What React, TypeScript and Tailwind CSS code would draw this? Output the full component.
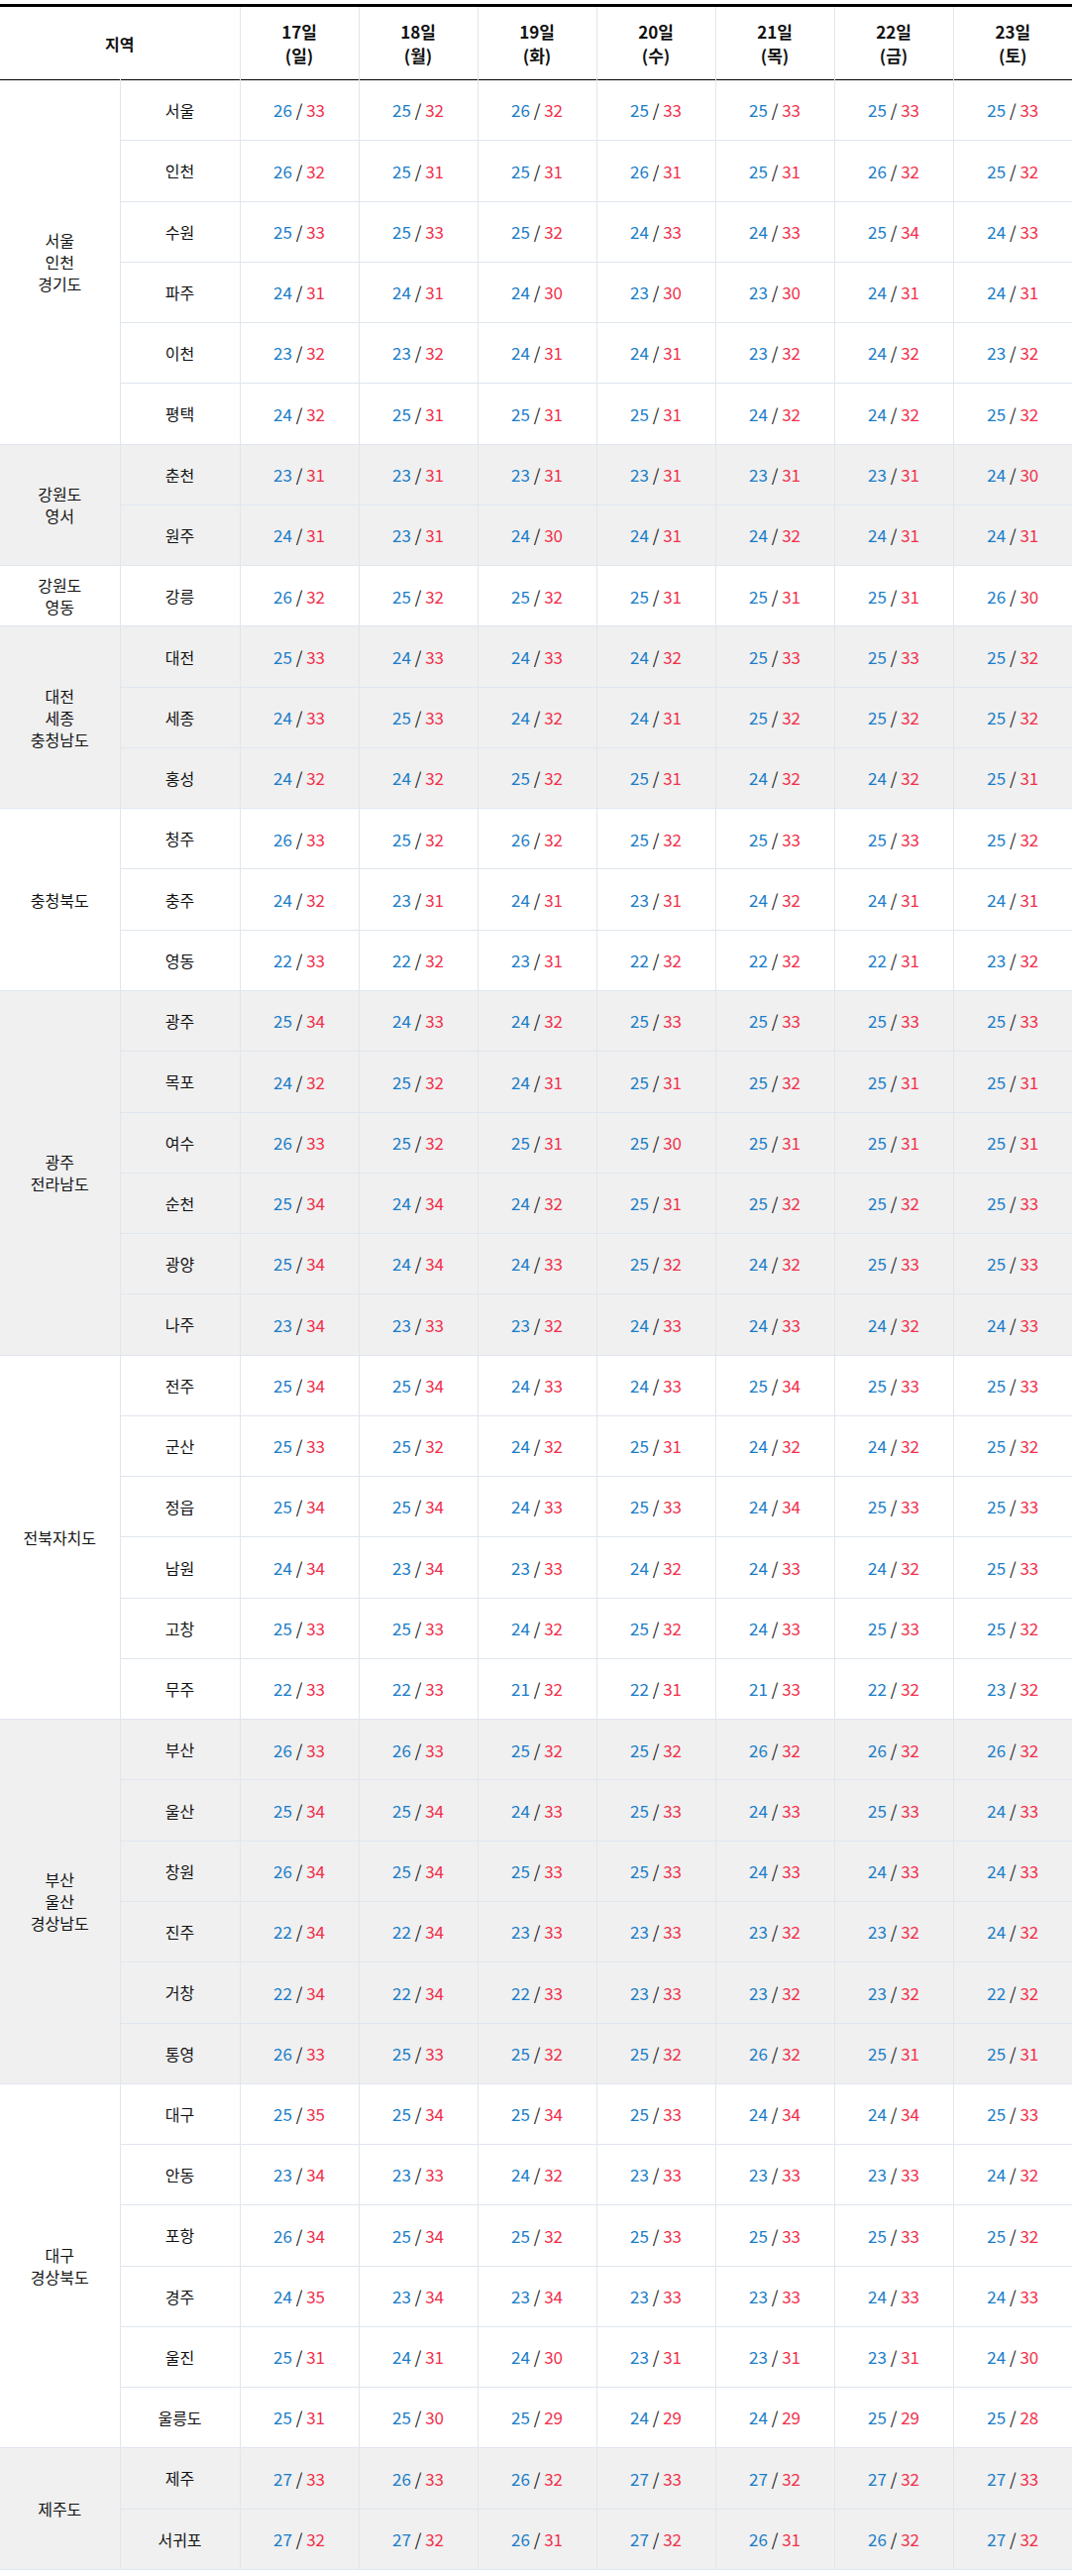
import React from 'react';

type Row = { name: string; temps: string[] };
type Group = { label: string[]; shaded: boolean; rows: Row[] };

const days = [
  ['17일', '(일)'],
  ['18일', '(월)'],
  ['19일', '(화)'],
  ['20일', '(수)'],
  ['21일', '(목)'],
  ['22일', '(금)'],
  ['23일', '(토)'],
];

// 최저/최고 기온 "최저/최고" 형식
const r = (name: string, s: string): Row => ({ name, temps: s.split(' ') });

const groups: Group[] = [
  {
    label: ['서울', '인천', '경기도'],
    shaded: false,
    rows: [
      r('서울', '26/33 25/32 26/32 25/33 25/33 25/33 25/33'),
      r('인천', '26/32 25/31 25/31 26/31 25/31 26/32 25/32'),
      r('수원', '25/33 25/33 25/32 24/33 24/33 25/34 24/33'),
      r('파주', '24/31 24/31 24/30 23/30 23/30 24/31 24/31'),
      r('이천', '23/32 23/32 24/31 24/31 23/32 24/32 23/32'),
      r('평택', '24/32 25/31 25/31 25/31 24/32 24/32 25/32'),
    ],
  },
  {
    label: ['강원도', '영서'],
    shaded: true,
    rows: [
      r('춘천', '23/31 23/31 23/31 23/31 23/31 23/31 24/30'),
      r('원주', '24/31 23/31 24/30 24/31 24/32 24/31 24/31'),
    ],
  },
  {
    label: ['강원도', '영동'],
    shaded: false,
    rows: [r('강릉', '26/32 25/32 25/32 25/31 25/31 25/31 26/30')],
  },
  {
    label: ['대전', '세종', '충청남도'],
    shaded: true,
    rows: [
      r('대전', '25/33 24/33 24/33 24/32 25/33 25/33 25/32'),
      r('세종', '24/33 25/33 24/32 24/31 25/32 25/32 25/32'),
      r('홍성', '24/32 24/32 25/32 25/31 24/32 24/32 25/31'),
    ],
  },
  {
    label: ['충청북도'],
    shaded: false,
    rows: [
      r('청주', '26/33 25/32 26/32 25/32 25/33 25/33 25/32'),
      r('충주', '24/32 23/31 24/31 23/31 24/32 24/31 24/31'),
      r('영동', '22/33 22/32 23/31 22/32 22/32 22/31 23/32'),
    ],
  },
  {
    label: ['광주', '전라남도'],
    shaded: true,
    rows: [
      r('광주', '25/34 24/33 24/32 25/33 25/33 25/33 25/33'),
      r('목포', '24/32 25/32 24/31 25/31 25/32 25/31 25/31'),
      r('여수', '26/33 25/32 25/31 25/30 25/31 25/31 25/31'),
      r('순천', '25/34 24/34 24/32 25/31 25/32 25/32 25/33'),
      r('광양', '25/34 24/34 24/33 25/32 24/32 25/33 25/33'),
      r('나주', '23/34 23/33 23/32 24/33 24/33 24/32 24/33'),
    ],
  },
  {
    label: ['전북자치도'],
    shaded: false,
    rows: [
      r('전주', '25/34 25/34 24/33 24/33 25/34 25/33 25/33'),
      r('군산', '25/33 25/32 24/32 25/31 24/32 24/32 25/32'),
      r('정읍', '25/34 25/34 24/33 25/33 24/34 25/33 25/33'),
      r('남원', '24/34 23/34 23/33 24/32 24/33 24/32 25/33'),
      r('고창', '25/33 25/33 24/32 25/32 24/33 25/33 25/32'),
      r('무주', '22/33 22/33 21/32 22/31 21/33 22/32 23/32'),
    ],
  },
  {
    label: ['부산', '울산', '경상남도'],
    shaded: true,
    rows: [
      r('부산', '26/33 26/33 25/32 25/32 26/32 26/32 26/32'),
      r('울산', '25/34 25/34 24/33 25/33 24/33 25/33 24/33'),
      r('창원', '26/34 25/34 25/33 25/33 24/33 24/33 24/33'),
      r('진주', '22/34 22/34 23/33 23/33 23/32 23/32 24/32'),
      r('거창', '22/34 22/34 22/33 23/33 23/32 23/32 22/32'),
      r('통영', '26/33 25/33 25/32 25/32 26/32 25/31 25/31'),
    ],
  },
  {
    label: ['대구', '경상북도'],
    shaded: false,
    rows: [
      r('대구', '25/35 25/34 25/34 25/33 24/34 24/34 25/33'),
      r('안동', '23/34 23/33 24/32 23/33 23/33 23/33 24/32'),
      r('포항', '26/34 25/34 25/32 25/33 25/33 25/33 25/32'),
      r('경주', '24/35 23/34 23/34 23/33 23/33 24/33 24/33'),
      r('울진', '25/31 24/31 24/30 23/31 23/31 23/31 24/30'),
      r('울릉도', '25/31 25/30 25/29 24/29 24/29 25/29 25/28'),
    ],
  },
  {
    label: ['제주도'],
    shaded: true,
    rows: [
      r('제주', '27/33 26/33 26/32 27/33 27/32 27/32 27/33'),
      r('서귀포', '27/32 27/32 26/31 27/32 26/31 26/32 27/32'),
    ],
  },
];

function Temp({ value }: { value: string }) {
  const [lo, hi] = value.split('/');
  return (
    <span className="text-[17px]">
      <span className="text-[#1a7dc8]">{lo}</span>
      <span className="text-[#222]"> / </span>
      <span className="text-[#f2304b]">{hi}</span>
    </span>
  );
}

export default function App() {
  return (
    <div className="w-[1082px] bg-white pt-[4px] pb-[5px] font-['Noto_Sans_CJK_KR','Noto_Sans',sans-serif] text-[#111]">
      <table className="w-full table-fixed border-collapse border-t-[3px] border-black text-center">
        <colgroup>
          <col className="w-[121px]" />
          <col className="w-[121px]" />
          {days.map((d) => (
            <col key={d[0]} className="w-[120px]" />
          ))}
        </colgroup>
        <thead>
          <tr className="h-[75px] border-b border-black">
            <th colSpan={2} className="border-r border-[#e0e6ee] text-[16px] font-bold">
              지역
            </th>
            {days.map(([d, w], i) => (
              <th
                key={d}
                className={`text-[17px] font-bold leading-[24px] ${i < days.length - 1 ? 'border-r border-[#e0e6ee]' : ''}`}
              >
                {d}
                <br />
                {w}
              </th>
            ))}
          </tr>
        </thead>
        <tbody>
          {groups.map((g) =>
            g.rows.map((row, ri) => (
              <tr key={g.label.join() + row.name} className={`h-[61.27px] border-b border-[#e0e6ee] ${g.shaded ? 'bg-[#f0f0f0]' : 'bg-white'}`}>
                {ri === 0 && (
                  <td rowSpan={g.rows.length} className="border-r border-b border-[#e0e6ee] text-[16px] leading-[22px]">
                    {g.label.map((l) => (
                      <div key={l}>{l}</div>
                    ))}
                  </td>
                )}
                <td className="border-r border-[#e0e6ee] text-[16px]">{row.name}</td>
                {row.temps.map((t, ti) => (
                  <td key={ti} className={ti < row.temps.length - 1 ? 'border-r border-[#e0e6ee]' : ''}>
                    <Temp value={t} />
                  </td>
                ))}
              </tr>
            ))
          )}
        </tbody>
      </table>
    </div>
  );
}
